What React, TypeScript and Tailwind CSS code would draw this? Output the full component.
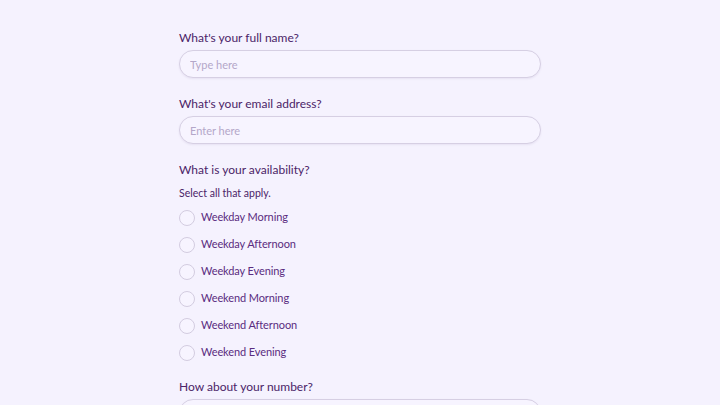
import { useState } from 'react';

const options = [
  'Weekday Morning',
  'Weekday Afternoon',
  'Weekday Evening',
  'Weekend Morning',
  'Weekend Afternoon',
  'Weekend Evening',
];

function Field({ label, placeholder, className = '' }: { label: string; placeholder: string; className?: string }) {
  return (
    <div className={className}>
      <label className="block text-[12px] leading-[20px] text-[#4b2468]">{label}</label>
      <input
        type="text"
        placeholder={placeholder}
        className="mt-[2px] block h-[28px] w-full rounded-full border border-[#d6cfe3] bg-[#f7f4ff] px-[10px] text-[11px] text-[#4b2468] placeholder:text-[#b4a7c9] shadow-[0_1px_2px_rgba(80,50,120,0.08)] outline-none"
      />
    </div>
  );
}

export default function App() {
  const [picked, setPicked] = useState<string[]>([]);

  const toggle = (o: string) =>
    setPicked((p) => (p.includes(o) ? p.filter((x) => x !== o) : [...p, o]));

  return (
    <div className="min-h-screen bg-[#f5f2fe] font-['Lato','Noto_Sans',sans-serif]">
      <form className="mx-auto w-[362px] pt-[28px]">
        <Field label="What's your full name?" placeholder="Type here" />
        <Field label="What's your email address?" placeholder="Enter here" className="mt-[16px]" />

        <div className="mt-[16px]">
          <p className="text-[12px] leading-[20px] text-[#4b2468]">What is your availability?</p>
          <p className="mt-[4px] text-[10.5px] leading-[18px] text-[#4b2468]">Select all that apply.</p>
          <div className="mt-[2px]">
            {options.map((o) => (
              <label key={o} className="flex h-[27px] cursor-pointer items-center gap-[6px]">
                <span
                  onClick={() => toggle(o)}
                  className={`h-[16px] w-[16px] shrink-0 rounded-full border ${
                    picked.includes(o) ? 'border-[#6b3a99] bg-[#6b3a99]' : 'border-[#d3cce0] bg-[#f7f4ff]'
                  }`}
                />
                <span className="text-[11px] tracking-[-0.1px] text-[#5a2c80]">{o}</span>
              </label>
            ))}
          </div>
        </div>

        <Field label="How about your number?" placeholder="Type here" className="mt-[11px]" />
      </form>
    </div>
  );
}
